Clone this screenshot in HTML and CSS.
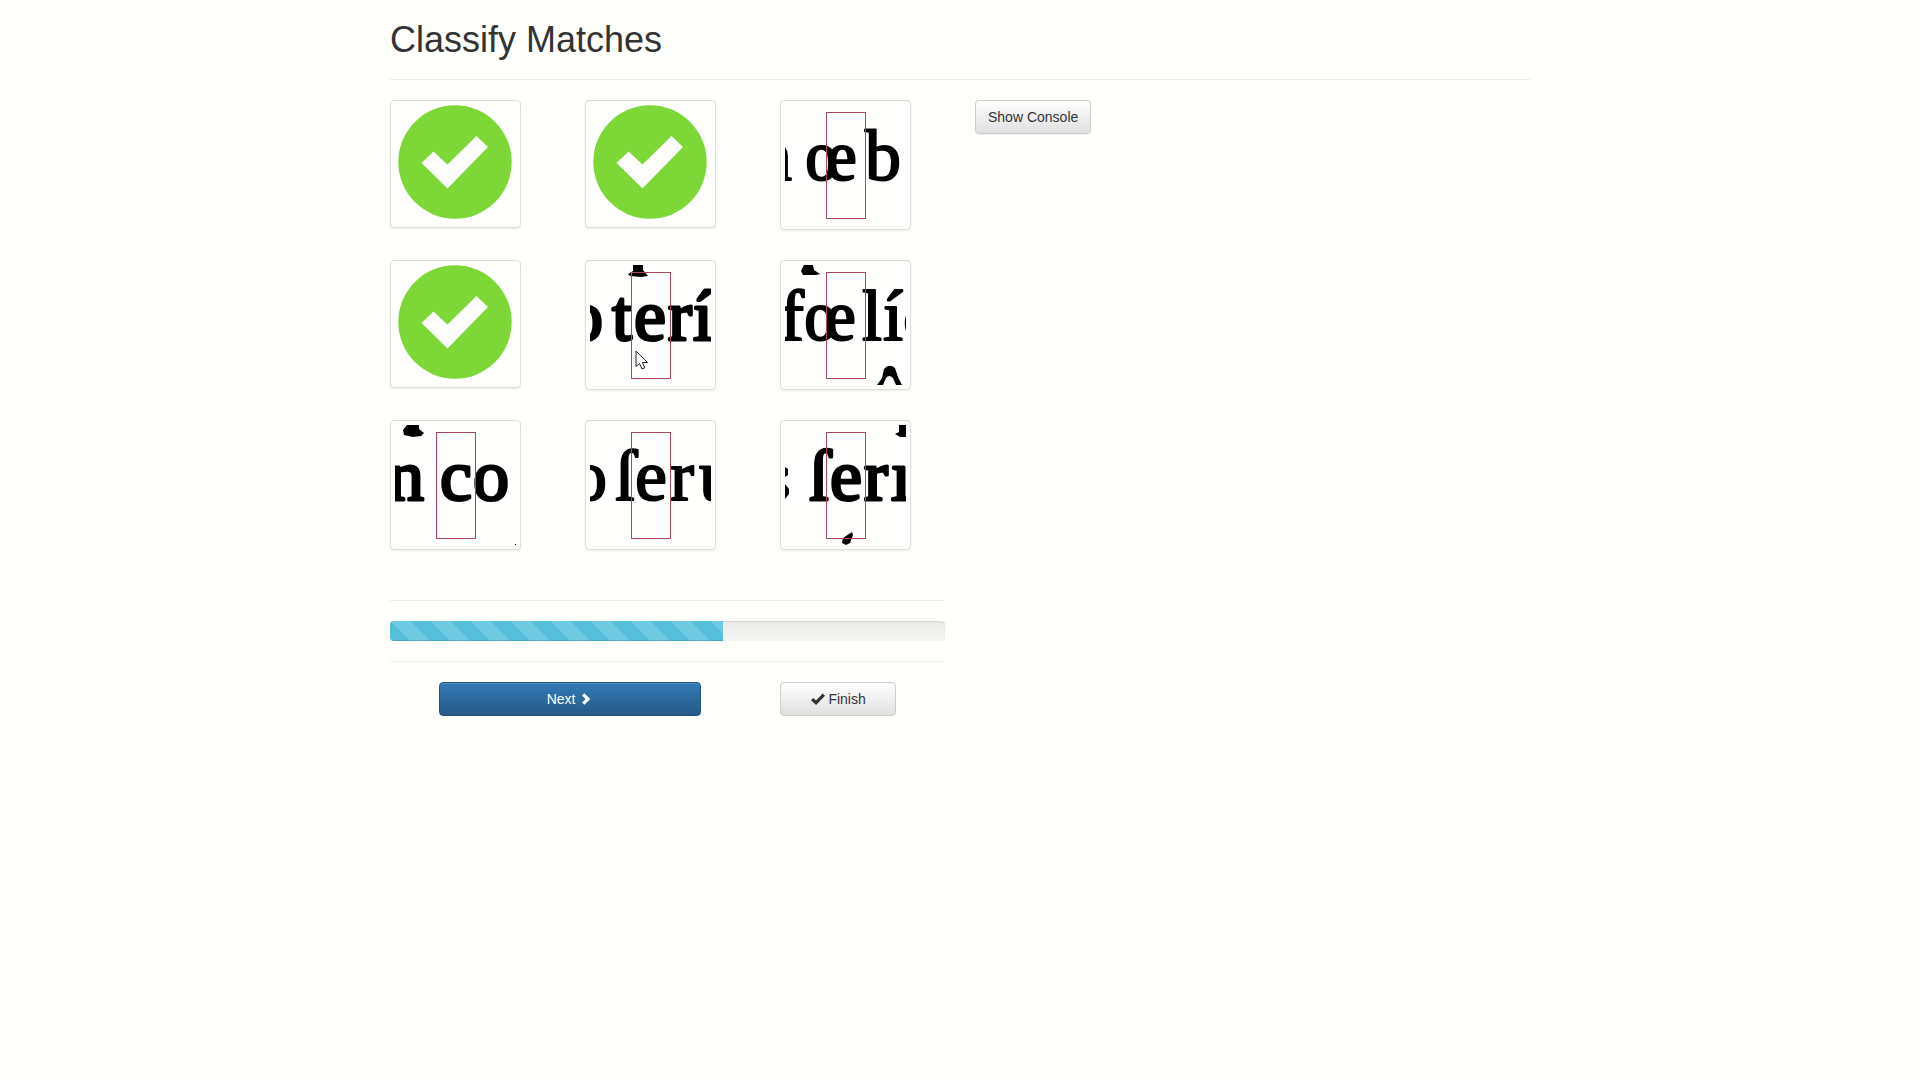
FILE: index.html
```html
<!DOCTYPE html>
<html lang="en">
<head>
<meta charset="utf-8">
<meta name="viewport" content="width=device-width, initial-scale=1">
<title>Classify Matches</title>
<link rel="stylesheet" href="styles.css">
</head>
<body>
<div class="container">
  <header class="page-header"><h1>Classify Matches</h1></header>
  <main class="columns">
    <section class="classifier">
      <div class="matches">
        <div class="match"><button class="thumbnail" type="button" aria-label="Match 1, accepted">
          <svg width="121" height="118" viewBox="0 0 121 118"><circle class="disc" cx="60" cy="57" r="56.7"/><path class="tick" d="M26.5 58 38.5 46.5 52.5 59.5 81.5 31 93 42 52.5 83.5Z"/></svg>
        </button></div>
        <div class="match"><button class="thumbnail" type="button" aria-label="Match 2, accepted">
          <svg width="121" height="118" viewBox="0 0 121 118"><circle class="disc" cx="60" cy="57" r="56.7"/><path class="tick" d="M26.5 58 38.5 46.5 52.5 59.5 81.5 31 93 42 52.5 83.5Z"/></svg>
        </button></div>
        <div class="match"><button class="thumbnail" type="button" aria-label="Match 3">
          <svg class="scan" width="121" height="120" viewBox="0 0 121 120"><text y="75" x="-29 20 80">nœb</text><rect class="frame" x="41.5" y="7.5" width="39" height="106"/></svg>
        </button></div>
        <div class="match"><button class="thumbnail" type="button" aria-label="Match 4, accepted">
          <svg width="121" height="118" viewBox="0 0 121 118"><circle class="disc" cx="60" cy="57" r="56.7"/><path class="tick" d="M26.5 58 38.5 46.5 52.5 59.5 81.5 31 93 42 52.5 83.5Z"/></svg>
        </button></div>
        <div class="match"><button class="thumbnail" type="button" aria-label="Match 5">
          <svg class="scan heavy" width="121" height="120" viewBox="0 0 121 120"><path d="M43 0H53V5L58 11 51 12 40 11 38 9 43 6Z"/><text y="75" x="-23 22 44 78 103">oterí</text><rect class="frame" x="41.5" y="7.5" width="39" height="106"/></svg>
        </button>
          <svg class="pointer" width="14" height="20" viewBox="0 0 14 20" aria-hidden="true"><path d="M1 1V16.5L4.5 13.5 7 19 9.8 17.8 7.5 12.5H12.5Z"/></svg>
        </div>
        <div class="match"><button class="thumbnail" type="button" aria-label="Match 6">
          <svg class="scan" width="121" height="120" viewBox="0 0 121 120"><path d="M19 0H28L29 5 35 9 31 10H18L16 6Z"/><text y="75" x="-5 19 77 98 118">fœlíc</text><path d="M92 120 97 113 99 104Q104 98 110 103L113 112 117 120H111L108 113Q104 109 101 113L98 120Z"/><rect class="frame" x="41.5" y="7.5" width="39" height="106"/></svg>
        </button></div>
        <div class="match"><button class="thumbnail" type="button" aria-label="Match 7">
          <svg class="scan heavy" width="121" height="120" viewBox="0 0 121 120"><path d="M12 0H24V4L29 8 26 11 18 12 9 10 8 5Z"/><text y="75" x="-7 45 78">nco</text><rect x="120" y="119" width="1" height="1"/><rect class="frame" x="41.5" y="7.5" width="39" height="106"/></svg>
        </button></div>
        <div class="match"><button class="thumbnail" type="button" aria-label="Match 8">
          <svg class="scan" width="121" height="120" viewBox="0 0 121 120"><text y="75" x="-19 25 45 80 109">oſeru</text><rect class="frame" x="41.5" y="7.5" width="39" height="106"/></svg>
        </button></div>
        <div class="match"><button class="thumbnail" type="button" aria-label="Match 9">
          <svg class="scan heavy" width="121" height="120" viewBox="0 0 121 120"><path d="M114 0H121V12H115L110 9 114 7Z"/><path d="M0 42 3 44V50L0 52ZM0 59 4 64V69L0 74Z"/><text y="75" x="24 45 79 106">ſerı</text><path d="M67 107 68 110 65 118 61 120 57 118 58 113Z"/><rect class="frame" x="41.5" y="7.5" width="39" height="106"/></svg>
        </button></div>
      </div>
      <hr>
      <div class="progress" role="progressbar" aria-label="Matches classified" aria-valuenow="60" aria-valuemin="0" aria-valuemax="100"><div class="progress-bar" style="width: 60%"></div></div>
      <hr>
      <div class="actions">
        <button class="btn btn-primary" type="button">Next <svg class="icon" width="14" height="14" viewBox="0 0 14 14" aria-hidden="true"><path d="M3 3.6 5.3 1.3 11.3 7 5.3 12.7 3 10.4 6.6 7Z"/></svg></button>
        <button class="btn btn-finish" type="button"><svg class="icon" width="14" height="14" viewBox="0 0 14 14" aria-hidden="true"><path d="M0 8.3 2.3 6 5 8.6 11.7 1.5 14 3.8 5.1 13Z"/></svg> Finish</button>
      </div>
    </section>
    <section class="console"><button class="btn" type="button">Show Console</button></section>
  </main>
</div>
</body>
</html>
```
FILE: styles.css
```css
* { box-sizing: border-box; }
body {
  margin: 0;
  background: #fffffc;
  color: #333;
  font: 14px/20px "Liberation Sans", Arial, sans-serif;
}
.container { max-width: 1170px; margin: 0 auto; padding: 0 15px; }
.page-header { margin: 20px 0; padding-bottom: 19px; border-bottom: 1px solid #eee; }
h1 { margin: 0; font-size: 36px; line-height: 40px; font-weight: 500; }
.columns { display: grid; grid-template-columns: 1fr 1fr; gap: 30px; align-items: start; }
.matches { display: grid; grid-template-columns: repeat(3, 1fr); gap: 30px; margin-bottom: 50px; }
.match { position: relative; display: flex; align-items: flex-start; }
.thumbnail {
  padding: 4px;
  border: 1px solid #ddd;
  border-radius: 4px;
  background: #fffffd;
  box-shadow: 0 1px 2px rgba(0, 0, 0, .075);
  cursor: pointer;
}
.thumbnail svg { display: block; overflow: hidden; }
.disc { fill: #7cd737; }
.tick { fill: #fdfdfb; }
.scan text {
  font: 72px "Liberation Serif", "Times New Roman", serif;
  stroke: #000;
  stroke-width: 2px;
  stroke-linejoin: round;
}
.heavy text { stroke-width: 3px; }
.frame { fill: none; stroke: #b04659; }
.pointer { position: absolute; left: 50px; top: 90px; fill: #fff; stroke: #222; stroke-width: 1px; pointer-events: none; }
hr { margin: 20px 0; border: 0; border-top: 1px solid #eee; }
.progress {
  height: 20px;
  overflow: hidden;
  border-radius: 4px;
  background: linear-gradient(#ebebe9, #f5f5f3);
  box-shadow: inset 0 1px 2px rgba(0, 0, 0, .1);
}
.progress-bar {
  height: 100%;
  background: linear-gradient(45deg, rgba(255, 255, 255, .15) 25%, transparent 25%, transparent 50%, rgba(255, 255, 255, .15) 50%, rgba(255, 255, 255, .15) 75%, transparent 75%) 1px 0 / 40px 40px #56c0dc;
  box-shadow: inset 0 -1px 0 rgba(0, 0, 0, .15);
}
.actions { display: grid; grid-template-columns: repeat(12, 1fr); margin: 0 -15px; }
.btn {
  padding: 6px 12px;
  border: 1px solid #ccc;
  border-radius: 4px;
  background: linear-gradient(#fff, #e0e0e0);
  box-shadow: inset 0 1px 0 rgba(255, 255, 255, .15), 0 1px 1px rgba(0, 0, 0, .075);
  color: #333;
  font: inherit;
  white-space: nowrap;
  cursor: pointer;
}
.actions .btn { margin: 0 15px; }
.btn-primary { grid-column: 2 / span 6; border-color: #245580; background: linear-gradient(#337ab7, #265a88); color: #fff; }
.btn-finish { grid-column: 9 / span 3; }
.icon { fill: currentColor; vertical-align: -2px; }
@media (max-width: 900px) {
  .columns { grid-template-columns: 1fr; }
}
```
